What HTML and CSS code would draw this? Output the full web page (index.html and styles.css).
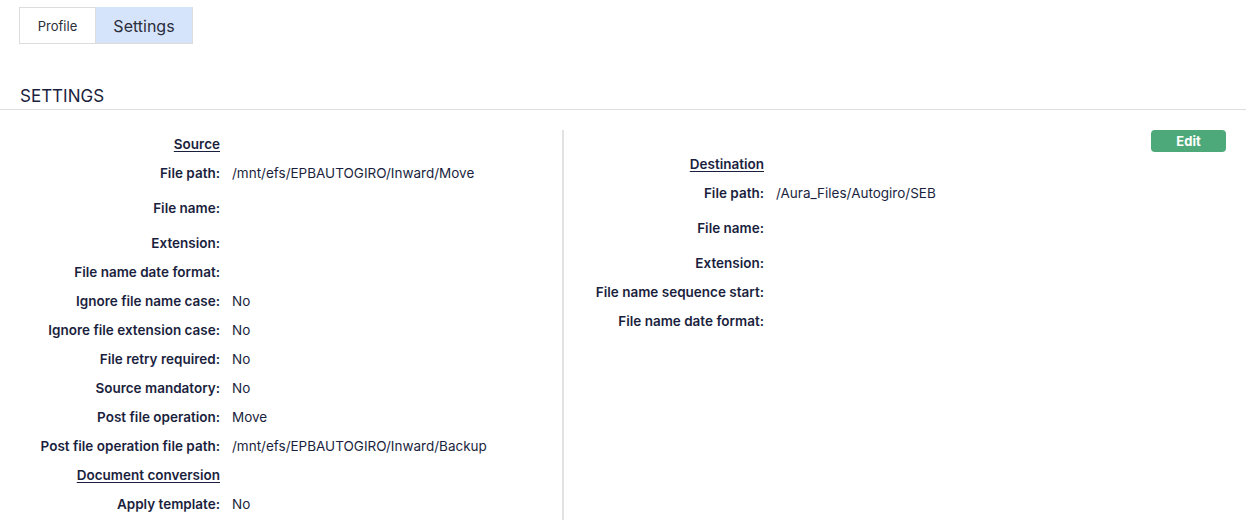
FILE: index.html
```html
<!DOCTYPE html>
<html>
<head>
<meta charset="utf-8">
<link rel="stylesheet" href="styles.css">
</head>
<body>
<div class="tabs">
  <div class="tab tab-profile">Profile</div>
  <div class="tab tab-settings active">Settings</div>
</div>
<h2 class="page-title">SETTINGS</h2>
<div class="content">
  <div class="col col-left">
    <div class="grid grid-left">
      <div class="row"><div class="label section">Source</div><div class="value"></div></div>
      <div class="row tall"><div class="label">File path:</div><div class="value">/mnt/efs/EPBAUTOGIRO/Inward/Move</div></div>
      <div class="row tall"><div class="label">File name:</div><div class="value"></div></div>
      <div class="row"><div class="label">Extension:</div><div class="value"></div></div>
      <div class="row"><div class="label">File name date format:</div><div class="value"></div></div>
      <div class="row"><div class="label">Ignore file name case:</div><div class="value">No</div></div>
      <div class="row"><div class="label">Ignore file extension case:</div><div class="value">No</div></div>
      <div class="row"><div class="label">File retry required:</div><div class="value">No</div></div>
      <div class="row"><div class="label">Source mandatory:</div><div class="value">No</div></div>
      <div class="row"><div class="label">Post file operation:</div><div class="value">Move</div></div>
      <div class="row"><div class="label">Post file operation file path:</div><div class="value">/mnt/efs/EPBAUTOGIRO/Inward/Backup</div></div>
      <div class="row"><div class="label section">Document conversion</div><div class="value"></div></div>
      <div class="row"><div class="label">Apply template:</div><div class="value">No</div></div>
    </div>
  </div>
  <div class="col col-right">
    <div class="actions"><button class="btn-edit">Edit</button></div>
    <div class="grid grid-right">
      <div class="row"><div class="label section">Destination</div><div class="value"></div></div>
      <div class="row tall"><div class="label">File path:</div><div class="value">/Aura_Files/Autogiro/SEB</div></div>
      <div class="row tall"><div class="label">File name:</div><div class="value"></div></div>
      <div class="row"><div class="label">Extension:</div><div class="value"></div></div>
      <div class="row"><div class="label">File name sequence start:</div><div class="value"></div></div>
      <div class="row"><div class="label">File name date format:</div><div class="value"></div></div>
    </div>
  </div>
</div>
</body>
</html>
```
FILE: styles.css
```css
* { box-sizing: border-box; }
html, body { margin: 0; padding: 0; background: #fff; }
body {
  font-family: Inter, "Noto Sans", sans-serif;
  color: #1b1f3e;
  width: 1246px;
  height: 530px;
  overflow: hidden;
}
.tabs {
  display: flex;
  margin: 7px 0 0 19px;
}
.tab {
  height: 37px;
  display: flex;
  align-items: center;
  justify-content: center;
  border: 1px solid #dcdcdc;
  color: #2a2d3a;
}
.tab-profile {
  width: 76px;
  font-size: 13px;
  border-right: none;
}
.tab-settings {
  width: 98px;
  font-size: 16px;
}
.tab.active {
  background: #d6e4fb;
  border-color: #d6e4fb #dcdcdc #dcdcdc #dcdcdc;
}
.page-title {
  margin: 42px 0 0 0;
  padding: 0 0 3px 20px;
  font-size: 17px;
  font-weight: 400;
  line-height: 20px;
  border-bottom: 1px solid #dedede;
  color: #1b1f3e;
}
.content {
  display: flex;
  padding-top: 20px;
}
.col-left {
  width: 564px;
  border-right: 2px solid #e2e2e2;
  height: 390px;
}
.col-right {
  flex: 1;
  padding-right: 20px;
}
.grid { display: flex; flex-direction: column; }
.row {
  display: grid;
  column-gap: 12px;
  padding: 6px 0;
  line-height: 17px;
  font-size: 13.5px;
}
.row.tall { padding-bottom: 12px; }
.grid-left .row { grid-template-columns: 220px 1fr; }
.grid-right .row { grid-template-columns: 200px 1fr; }
.label {
  text-align: right;
  font-weight: 600;
  white-space: nowrap;
}
.label.section { text-decoration: underline; text-underline-offset: 2px; }
.value { font-weight: 400; white-space: nowrap; }
.actions {
  display: flex;
  justify-content: flex-end;
  height: 20px;
}
.btn-edit {
  width: 75px;
  height: 22px;
  border: none;
  border-radius: 4px;
  background: #4ea97a;
  color: #fff;
  font-family: Inter, "Noto Sans", sans-serif;
  font-weight: 700;
  font-size: 13px;
  padding: 0;
}
```
